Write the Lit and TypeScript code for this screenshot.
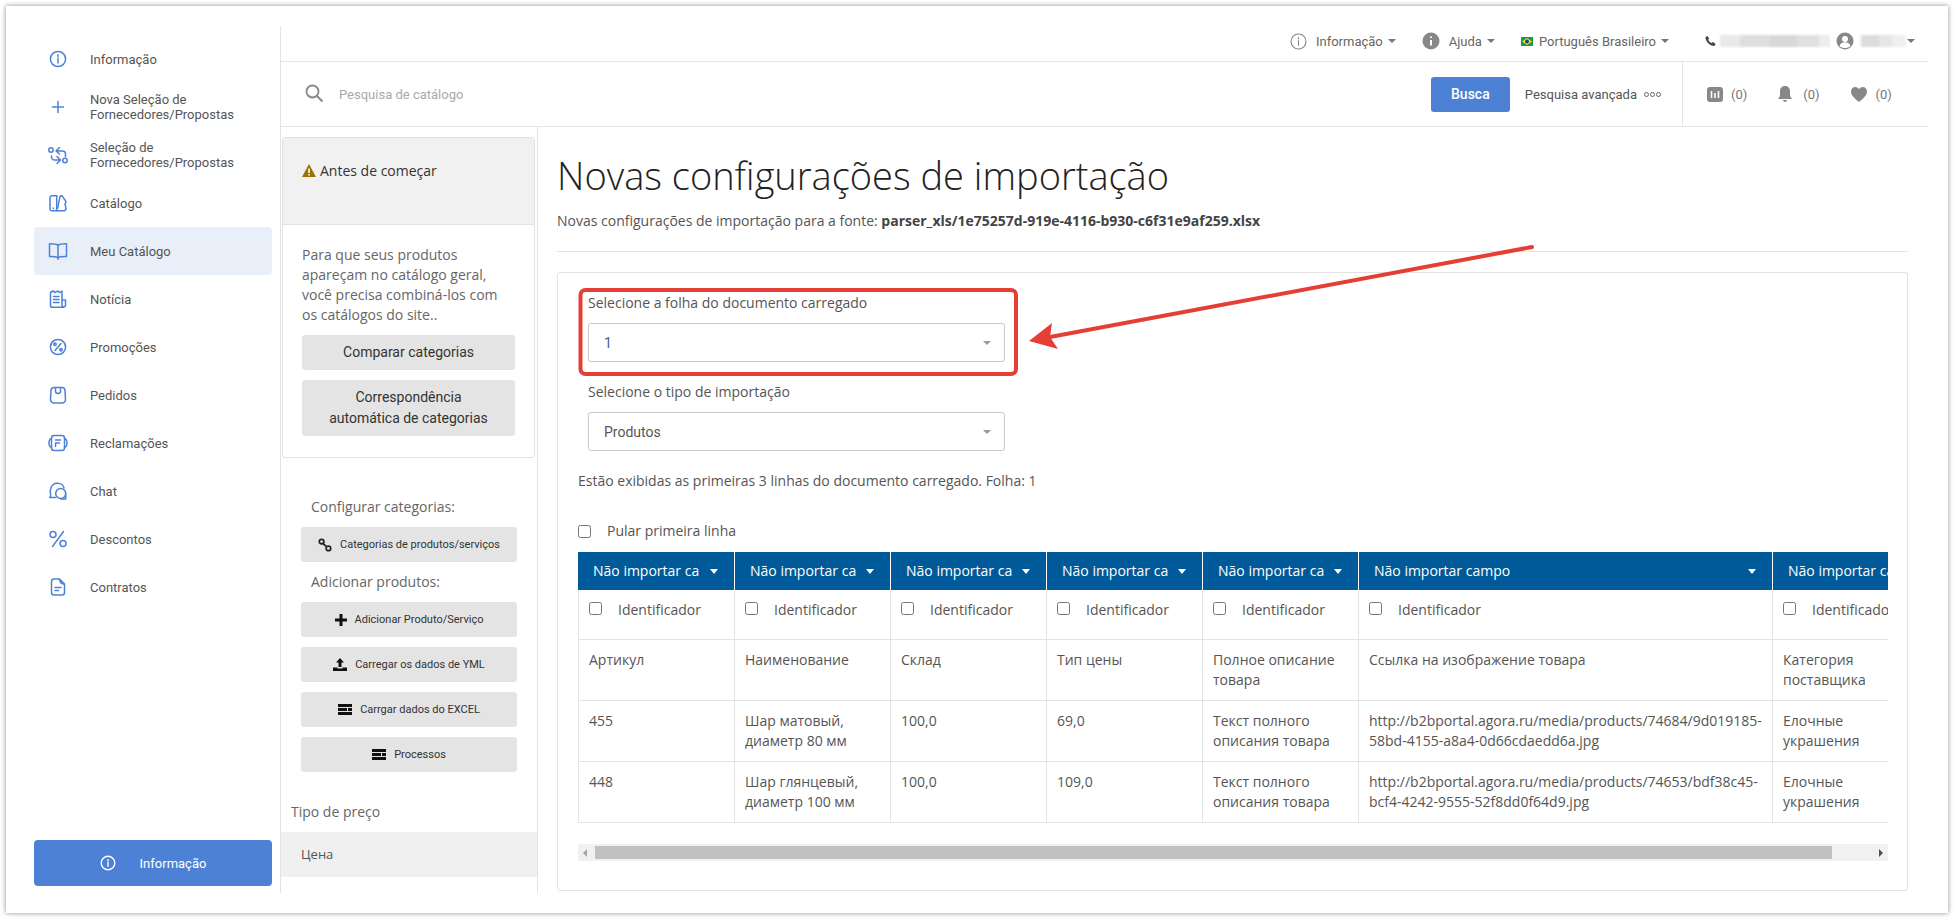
import { LitElement, html, css, svg } from "lit";
import { customElement } from "lit/decorators.js";

const navIcons: Record<string, any> = {
  info: svg`<circle cx="10" cy="10" r="7.6"/><path d="M10 9v5M10 5.8v1.4"/>`,
  plus: svg`<path d="M10 4.5v11M4.5 10h11"/>`,
  swap: svg`<circle cx="3" cy="5" r="2.200"/><circle cx="17" cy="15.500" r="2.200"/><path d="M17.500 11.500V9a3 3 0 0 0-3-3H8.500M11.500 2.500L8 6l3.500 3M3.500 11v1.500a3 3 0 0 0 3 2.500h6M9 11.500l3.500 3.500L9 18.500"/>`,
  cat: svg`<path d="M8.700 2.700H3.700A1.800 1.800 0 0 0 2 4.500V16a1.800 1.800 0 0 0 1.800 1.800H16a2 2 0 0 0 2-2.500l-1-4.300 1-2.300-3.300-5a1.500 1.500 0 0 0-2.700 0L9.500 15.300"/><path d="M8.700 2.700v15M5.300 15v.6"/>`,
  book: svg`<path d="M10 4.200C8 2.900 5 2.700 1.500 2.800v12.700c3.500-.1 6.500 0 8.500 1.200 2-1.200 5-1.300 8.500-1.200V2.800C15 2.700 12 2.900 10 4.200zM10 4.200v14"/>`,
  news: svg`<path d="M14 11h3.500v5.500a1.800 1.800 0 0 1-3.500 0V2l-2.200 1.500L9.500 2 7.300 3.500 4.800 2 2.500 3.500v13a1.800 1.800 0 0 0 1.800 1.800h11.500"/><path d="M5.500 7.500h5.500M5.500 10.500h5.500M5.500 13.500h5.500"/>`,
  promo: svg`<circle cx="10" cy="10" r="7.6"/><path d="M13 6.500l-6 7"/><circle cx="7" cy="7.300" r="1.200"/><circle cx="13" cy="12.700" r="1.200"/>`,
  bag: svg`<path d="M6 2.500h8a3 3 0 0 1 3 3l.5 9a3.500 3.500 0 0 1-3.500 3.500H6a3.500 3.500 0 0 1-3.500-3.500l.5-9a3 3 0 0 1 3-3z"/><path d="M7.500 3v3a2.500 2.500 0 0 0 5 0V3"/>`,
  claim: svg`<rect x="3.500" y="2.500" width="13" height="15" rx="2.500"/><path d="M3.500 5.500C1.500 6 1 7.500 1 10s.5 4 2.500 4.500M16.500 5.500c2 .5 2.500 2 2.500 4.500s-.5 4-2.500 4.500M7.500 7h5M7.500 10h4M7.500 10v3.500"/>`,
  chat: svg`<path d="M7.500 16.500H1.800c.8-1 1-1.800.8-3C1.500 9 3 2.500 9 2.200c3.800-.2 6.500 2.200 7 4.800"/><circle cx="12.700" cy="12.500" r="5"/><path d="M17.700 12.500v5.500h-5"/>`,
  perc: svg`<path d="M15.500 2.500l-11 15"/><circle cx="5" cy="5.500" r="3"/><circle cx="15" cy="14.500" r="3"/>`,
  doc: svg`<path d="M11.500 2H6a2.500 2.500 0 0 0-2.500 2.500v11A2.500 2.500 0 0 0 6 18h8a2.500 2.500 0 0 0 2.500-2.500V7c-2.800.3-4.700-1.500-5-5zM11.500 2l5 5M7 10.500h6M7 13.500h3.500"/>`,
};

const nav = [
  ["info", "Informação"],
  ["plus", "Nova Seleção de Fornecedores/Propostas"],
  ["swap", "Seleção de Fornecedores/Propostas"],
  ["cat", "Catálogo"],
  ["book", "Meu Catálogo"],
  ["news", "Notícia"],
  ["promo", "Promoções"],
  ["bag", "Pedidos"],
  ["claim", "Reclamações"],
  ["chat", "Chat"],
  ["perc", "Descontos"],
  ["doc", "Contratos"],
];

const link = svg`<svg class="bi" width="14" height="14" viewBox="0 0 14 14" fill="none" stroke="#222" stroke-width="1.700"><circle cx="3.600" cy="3.600" r="2.300"/><circle cx="10.400" cy="10.400" r="2.300"/><path d="M5 5.500l3.500 3.200"/></svg>`;
const plusI = svg`<svg class="bi" width="12" height="12" viewBox="0 0 12 12" fill="#111"><path d="M4.500 0h3v4.500H12v3H7.500V12h-3V7.500H0v-3h4.500z"/></svg>`;
const upI = svg`<svg class="bi" width="14" height="13" viewBox="0 0 14 13" fill="#111"><path d="M7 0l4 4.500H8.500V9h-3V4.500H3zM0 9.500h4.500v1h5v-1H14V13H0z"/></svg>`;
const barsI = svg`<svg class="bi" width="14" height="11" viewBox="0 0 14 11" fill="#111"><path d="M0 0h14v3H0zM0 4h9v3H0zM10 4h4v3h-4zM0 8h14v3H0z"/></svg>`;

const head = [
  "Não importar ca", "Não importar ca", "Não importar ca", "Não importar ca", "Não importar ca", "Não importar campo", "Não importar ca",
];
const rows = [
  ["Артикул", "Наименование", "Склад", "Тип цены", "Полное описание товара", "Ссылка на изображение товара", "Категория поставщика"],
  ["455", "Шар матовый, диаметр 80 мм", "100,0", "69,0", "Текст полного описания товара", "http://b2bportal.agora.ru/media/products/74684/9d019185-58bd-4155-a8a4-0d66cdaedd6a.jpg", "Елочные украшения"],
  ["448", "Шар глянцевый, диаметр 100 мм", "100,0", "109,0", "Текст полного описания товара", "http://b2bportal.agora.ru/media/products/74653/bdf38c45-bcf4-4242-9555-52f8dd0f64d9.jpg", "Елочные украшения"],
];

@customElement("app-root")
export class AppRoot extends LitElement {
  static styles = css`
    :host { display: block; position: relative; width: 1954px; height: 919px; overflow: hidden; background: #fff; font-family: Roboto, sans-serif; color: #555; }
    * { box-sizing: border-box; }
    .frame { position: absolute; inset: 6px; background: #fff; box-shadow: 0 0 5px rgba(0,0,0,.45); padding: 20px 20px 20px 0; display: flex; }
    .side { width: 275px; flex: none; border-right: 1px solid #e3e3e3; padding: 9px 8px 7px 28px; display: flex; flex-direction: column; }
    .item { height: 48px; display: flex; align-items: center; gap: 22px; padding-left: 14px; font-size: 13px; line-height: 15px; color: #555; border-radius: 4px; }
    .item.on { background: #e9eff9; }
    .item svg { flex: none; }
    .item span { width: 160px; }
    .ni { fill: none; stroke: #4d81d6; stroke-width: 1.500; stroke-linecap: round; stroke-linejoin: round; }
    .sidebtn { margin-top: auto; height: 46px; background: #4d81d6; border-radius: 4px; color: #fff; font-size: 13px; display: flex; align-items: center; justify-content: center; gap: 24px; }
    .right { flex: 1; min-width: 0; display: flex; flex-direction: column; }
    .top { height: 36px; flex: none; border-bottom: 1px solid #e6e6e6; display: flex; align-items: center; justify-content: flex-end; padding: 0 13px 5px 0; font-size: 13px; color: #666; }
    .caret { width: 0; height: 0; border-left: 4px solid transparent; border-right: 4px solid transparent; border-top: 4px solid #777; display: inline-block; flex: none; }
    .top .caret { margin-left: 5px; }
    .ml6 { margin-left: 6px; } .ml9 { margin-left: 9px; }
    .top .ic2 { margin-left: 26px; } .top .ic3 { margin-left: 26px; } .top .ic4 { margin-left: 36px; }
    .blur { height: 12px; filter: blur(1px); }
    .b1 { width: 110px; margin-left: 4px; background: linear-gradient(90deg, #e9e9e9 0 18%, #dedede 18% 45%, #d8d8d8 45% 70%, #e0e0e0 70% 90%, #ececec 90%); }
    .b2 { width: 45px; margin-left: 7px; background: linear-gradient(90deg, #dcdcdc 0 40%, #e6e6e6 40% 70%, #f0f0f0 70%); }
    .top .b2 + .caret { margin-left: 1px; }
    .search { height: 65px; flex: none; border-bottom: 1px solid #e6e6e6; display: flex; align-items: center; padding-left: 24px; font-size: 13px; }
    .ph { color: #aaa; margin-left: 14px; font-size: 13px; }
    .busca { margin-left: auto; width: 79px; height: 35px; background: #4d81d6; color: #fff; border-radius: 3px; display: flex; align-items: center; justify-content: center; font-weight: 500; font-size: 14px; }
    .adv { margin-left: 15px; font-size: 13px; color: #555; display: flex; align-items: center; gap: 7px; }
    .dots { display: flex; gap: 1px; }
    .dots i { width: 5px; height: 5px; border: 1.500px solid #666; border-radius: 50%; }
    .counts { margin-left: 21px; width: 246px; height: 100%; border-left: 1px solid #e6e6e6; display: flex; align-items: center; padding-left: 24px; color: #777; font-size: 13px; }
    .counts span { margin-left: 8px; }
    .counts .c2 { margin-left: 31px; } .counts .c3 { margin-left: 31px; }
    .counts .s2 { margin-left: 11px; } .counts .s3 { margin-left: 9px; }
    .body { flex: 1; min-height: 0; display: flex; }
    .panel { width: 257px; flex: none; border-right: 1px solid #e3e3e3; font-family: "Open Sans", sans-serif; font-size: 14px; line-height: 20px; }
    .card { margin: 10px 2px 0 1px; height: 321px; border: 1px solid #e2e2e2; border-radius: 3px; }
    .chead { height: 87px; background: #f1f1f1; border-bottom: 1px solid #e2e2e2; padding: 23px 19px 0; color: #333; display: flex; align-items: flex-start; gap: 4px; }
    .chead svg { margin-top: 3px; }
    .cbody { padding: 20px 19px; color: #666; }
    .btn { background: #e4e4e4; border-radius: 3px; color: #333; font-family: Roboto, sans-serif; display: flex; align-items: center; justify-content: center; text-align: center; }
    .b14 { font-size: 14px; line-height: 21px; margin-top: 10px; min-height: 35px; padding: 7px 25px; }
    .sec { padding: 39px 20px 0; }
    .lbl { color: #666; padding-left: 10px; height: 20px; }
    .b11 { height: 35px; margin-top: 10px; font-size: 11px; gap: 8px; }
    .lbl.l2 { margin-top: 10px; }
    .tipo { margin: 30px 0 0 10px; color: #666; }
    .cena { margin-top: 10px; height: 45px; background: #f0f0f0; padding: 0 0 2px 20px; display: flex; align-items: center; font-size: 13px; color: #555; }
    .main { flex: 1; min-width: 0; padding: 23px 20px 0 19px; font-family: "Open Sans", sans-serif; }
    h1 { margin: 0; font-size: 38px; line-height: 50px; font-weight: 300; color: #222; }
    .sub { margin-top: 11px; font-size: 14px; line-height: 20px; color: #555; padding-bottom: 20px; border-bottom: 1px solid #e4e4e4; height: 41px; }
    .sub b { font-weight: 700; color: #444; }
    .box { margin-top: 20px; height: 619px; border: 1px solid #e2e2e2; border-radius: 3px; padding: 20px 19px 0 20px; font-size: 14px; line-height: 20px; color: #555; }
    .fl { padding-left: 10px; }
    .sel { margin: 10px 0 0 10px; width: 417px; height: 39px; border: 1px solid #c9c9c9; border-radius: 3px; display: flex; align-items: center; justify-content: space-between; padding: 0 13px 0 15px; font-family: Roboto, sans-serif; font-size: 14px; }
    .sel .caret { border-top-color: #999; }
    .one { color: #3f6294; }
    .fl.f2 { margin-top: 20px; }
    .inf { margin-top: 20px; }
    .chk { margin-top: 30px; display: flex; align-items: center; gap: 16px; }
    input { margin: 0; width: 13px; height: 13px; flex: none; }
    .wrap { margin-top: 11px; width: 1310px; overflow: hidden; }
    table { border-collapse: separate; border-spacing: 0; table-layout: fixed; width: 1351px; }
    .w0 { width: 157px; } .w { width: 156px; } .wl { width: 414px; }
    th { height: 38px; background: #005a9a; color: #fff; font-weight: 400; font-size: 14px; text-align: left; padding: 0 16px 0 15px; border-right: 1px solid #fff; white-space: nowrap; overflow: hidden; }
    .th { display: flex; align-items: center; justify-content: space-between; }
    .th .caret { border-left-width: 4.500px; border-right-width: 4.500px; border-top: 5px solid #fff; }
    td { vertical-align: top; padding: 10px; border-right: 1px solid #e4e4e4; border-bottom: 1px solid #e4e4e4; height: 61px; overflow: hidden; }
    td:first-child { border-left: 1px solid #e4e4e4; }
    .idr td { height: 50px; padding: 10px 10px 0; }
    .id { display: flex; align-items: flex-start; gap: 16px; white-space: nowrap; }
    .id input { margin-top: 2px; }
    .sb { margin-top: 21px; width: 1310px; height: 17px; background: #f1f1f1; display: flex; align-items: center; position: relative; }
    .thumb { margin-left: 17px; width: 1237px; height: 13px; background: #c1c1c1; }
    .al { left: 5px; width: 0; height: 0; border-top: 4px solid transparent; border-bottom: 4px solid transparent; border-right: 4px solid #a3a3a3; position: absolute; }
    .ar { margin-left: 47px; width: 0; height: 0; border-top: 4px solid transparent; border-bottom: 4px solid transparent; border-left: 4px solid #505050; }
    .over { position: absolute; left: 0; top: 0; pointer-events: none; }
  `;

  render() {
    return html`
      <div class="frame">
        <aside class="side">
          ${nav.map(([k, t]) => html`<div class="item ${k === "book" ? "on" : ""}"><svg class="ni" width="20" height="20" viewBox="0 0 20 20">${navIcons[k]}</svg><span>${t}</span></div>`)}
          <div class="sidebtn"><svg width="16" height="16" viewBox="0 0 20 20" fill="none" stroke="#fff" stroke-width="1.700" stroke-linecap="round"><circle cx="10" cy="10" r="8.500"/><path d="M10 9v5M10 5.800v1.400"/></svg><span>Informação</span></div>
        </aside>
        <div class="right">
          <div class="top">
            <svg width="17" height="17" viewBox="0 0 20 20" fill="none" stroke="#888" stroke-width="1.300" stroke-linecap="round"><circle cx="10" cy="10" r="8.800"/><path d="M10 9v5.500M10 5.500v1.200"/></svg>
            <span class="ml9">Informação</span><i class="caret"></i>
            <svg class="ic2" width="18" height="18" viewBox="0 0 18 18"><circle cx="9" cy="9" r="8.500" fill="#888"/><path d="M9 8v5.500M9 4.500v1.500" stroke="#fff" stroke-width="2"/></svg>
            <span class="ml9">Ajuda</span><i class="caret"></i>
            <svg class="ic3" width="12" height="9" viewBox="0 0 12 9"><rect width="12" height="9" fill="#1a9a4a"/><path d="M6 1l5 3.500L6 8 1 4.500z" fill="#f6d51f"/><circle cx="6" cy="4.500" r="1.900" fill="#1c3f94"/></svg>
            <span class="ml6">Português Brasileiro</span><i class="caret"></i>
            <svg class="ic4" width="11" height="12" viewBox="0 0 12 12" fill="#444"><path d="M2.500.5L4.500 3 3.500 4.500c.6 1.600 2 3 3.700 3.800L8.500 7l3 2-1 2.500C5 11.500.5 6.500.5 2z"/></svg>
            <div class="blur b1"></div>
            <svg class="ml6" width="18" height="18" viewBox="0 0 18 18"><circle cx="9" cy="9" r="8.500" fill="#888"/><circle cx="9" cy="7" r="3" fill="#fff"/><path d="M3.500 14c1-3 3-3.800 5.500-3.800s4.500.8 5.500 3.800c-3 2.800-8 2.800-11 0z" fill="#fff"/></svg>
            <div class="blur b2"></div>
            <i class="caret"></i>
          </div>
          <div class="search">
            <svg width="20" height="20" viewBox="0 0 20 20" fill="none" stroke="#888" stroke-width="1.800"><circle cx="7.500" cy="7.500" r="6"/><path d="M11.800 11.800l5.700 5.700" stroke-width="2"/></svg>
            <span class="ph">Pesquisa de catálogo</span>
            <div class="busca">Busca</div>
            <div class="adv">Pesquisa avançada <span class="dots"><i></i><i></i><i></i></span></div>
            <div class="counts">
              <svg width="16" height="15" viewBox="0 0 16 15"><rect width="16" height="15" rx="3" fill="#888"/><path d="M4.500 4v7M8 6v5M11.500 4v7" stroke="#fff" stroke-width="1.600"/></svg><span>(0)</span>
              <svg class="c2" width="14" height="16" viewBox="0 0 14 16" fill="#888"><path d="M7 0c3 0 5 2.300 5 5v5l2 3H0l2-3V5c0-2.700 2-5 5-5zM5 14h4c0 2.500-4 2.500-4 0z"/></svg><span class="s2">(0)</span>
              <svg class="c3" width="16" height="15" viewBox="0 0 16 15" fill="#888"><path d="M8 15C3 11 0 8 0 4.500 0 1.800 2 0 4.200 0 5.800 0 7.200.8 8 2.200 8.800.8 10.200 0 11.800 0 14 0 16 1.800 16 4.500 16 8 13 11 8 15z"/></svg><span class="s3">(0)</span>
            </div>
          </div>
          <div class="body">
            <div class="panel">
              <div class="card">
                <div class="chead">
                  <svg width="14" height="13" viewBox="0 0 14 13"><path d="M7 0l7 13H0z" fill="#9a7400"/><path d="M7 4.500v4.500M7 10v1.500" stroke="#fff" stroke-width="1.600"/></svg>
                  <span>Antes de começar</span>
                </div>
                <div class="cbody">
                  Para que seus produtos apareçam no catálogo geral, você precisa combiná-los com os catálogos do site..
                  <div class="btn b14">Comparar categorias</div>
                  <div class="btn b14">Correspondência automática de categorias</div>
                </div>
              </div>
              <div class="sec">
                <div class="lbl">Configurar categorias:</div>
                <div class="btn b11">${link}<span>Categorias de produtos/serviços</span></div>
                <div class="lbl l2">Adicionar produtos:</div>
                <div class="btn b11">${plusI}<span>Adicionar Produto/Serviço</span></div>
                <div class="btn b11">${upI}<span>Carregar os dados de YML</span></div>
                <div class="btn b11">${barsI}<span>Carrgar dados do EXCEL</span></div>
                <div class="btn b11">${barsI}<span>Processos</span></div>
              </div>
              <div class="tipo">Tipo de preço</div>
              <div class="cena">Цена</div>
            </div>
            <div class="main">
              <h1>Novas configurações de importação</h1>
              <div class="sub">Novas configurações de importação para a fonte: <b>parser_xls/1e75257d-919e-4116-b930-c6f31e9af259.xlsx</b></div>
              <div class="box">
                <div class="fl">Selecione a folha do documento carregado</div>
                <div class="sel"><span class="one">1</span><i class="caret"></i></div>
                <div class="fl f2">Selecione o tipo de importação</div>
                <div class="sel"><span>Produtos</span><i class="caret"></i></div>
                <div class="inf">Estão exibidas as primeiras 3 linhas do documento carregado. Folha: 1</div>
                <div class="chk"><input type="checkbox" /><span>Pular primeira linha</span></div>
                <div class="wrap">
                  <table>
                    <colgroup><col class="w0"/><col class="w"/><col class="w"/><col class="w"/><col class="w"/><col class="wl"/><col class="w"/></colgroup>
                    <thead><tr>${head.map((h) => html`<th><div class="th"><span>${h}</span><i class="caret"></i></div></th>`)}</tr></thead>
                    <tbody>
                      <tr class="idr">${head.map(() => html`<td><label class="id"><input type="checkbox" /><span>Identificador</span></label></td>`)}</tr>
                      ${rows.map((r) => html`<tr>${r.map((c) => html`<td>${c}</td>`)}</tr>`)}
                    </tbody>
                  </table>
                </div>
                <div class="sb"><i class="al"></i><div class="thumb"></div><i class="ar"></i></div>
              </div>
            </div>
          </div>
        </div>
      </div>
      <svg class="over" width="1954" height="919" viewBox="0 0 1954 919">
        <rect x="580.500" y="290" width="435.500" height="84" rx="5" fill="none" stroke="#e53e35" stroke-width="4"/>
        <path d="M1532 247L1050 337" stroke="#e53e35" stroke-width="4" stroke-linecap="round"/>
        <path d="M1029 341L1052 323 1050 337 1058 349z" fill="#e53e35"/>
      </svg>
    `;
  }
}
